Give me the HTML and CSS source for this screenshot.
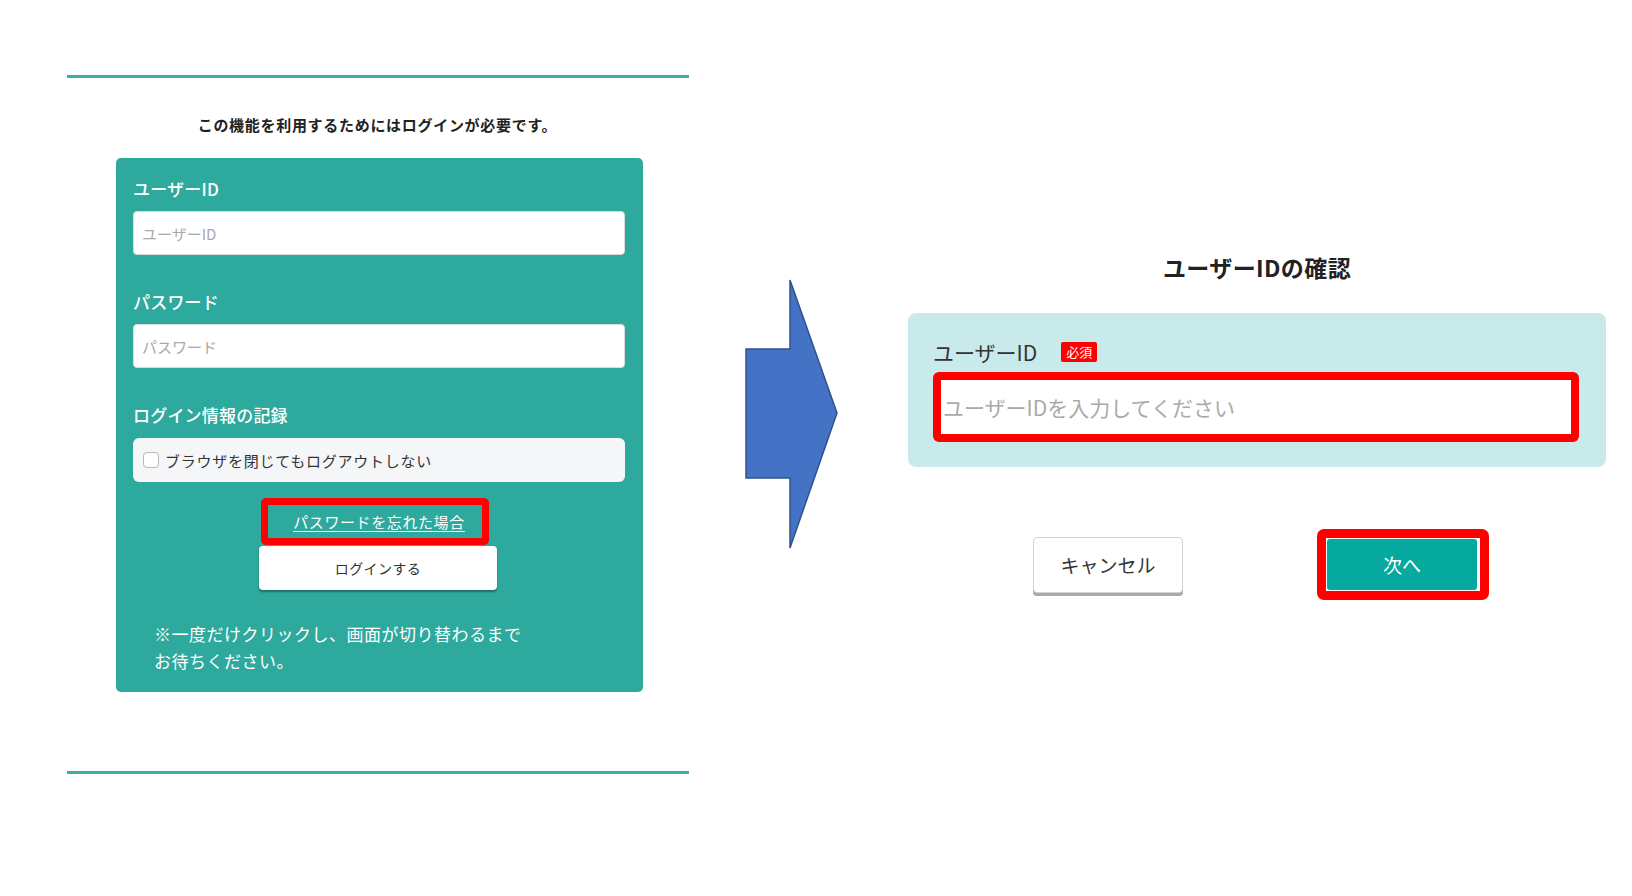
FILE: index.html
```html
<!DOCTYPE html>
<html lang="ja">
<head>
<meta charset="utf-8">
<title>ログイン</title>
<link rel="stylesheet" href="styles.css">
</head>
<body>
<div class="stage">
  <section class="left">
    <div class="rule"></div>
    <p class="lead">この機能を利用するためにはログインが必要です。</p>
    <form class="login">
      <label class="flabel">ユーザーID</label>
      <input class="field" type="text" placeholder="ユーザーID">
      <label class="flabel gap">パスワード</label>
      <input class="field" type="password" placeholder="パスワード">
      <label class="flabel gap">ログイン情報の記録</label>
      <div class="remember"><span class="check"></span><span>ブラウザを閉じてもログアウトしない</span></div>
      <div class="mark-link"><a href="#" class="forgot">パスワードを忘れた場合</a></div>
      <button type="button" class="login-btn">ログインする</button>
      <p class="note">※一度だけクリックし、画面が切り替わるまで<br>お待ちください。</p>
    </form>
    <div class="rule bottom"></div>
  </section>

  <svg class="arrow" width="96" height="272" viewBox="0 0 96 272">
    <polygon points="2,71 46,71 46,2 93,135 46,270 46,200 2,200" fill="#4472c4" stroke="#2f528f" stroke-width="1.5" stroke-linejoin="miter"/>
  </svg>

  <section class="right">
    <h2 class="title">ユーザーIDの確認</h2>
    <div class="confirm">
      <div class="clabel-row"><span class="clabel">ユーザーID</span><span class="badge">必須</span></div>
      <input class="cfield" type="text" placeholder="ユーザーIDを入力してください">
    </div>
    <div class="actions">
      <button type="button" class="cancel">キャンセル</button>
      <div class="mark-next"><button type="button" class="next">次へ</button></div>
    </div>
  </section>
</div>
</body>
</html>
```

FILE: styles.css
```css
* { box-sizing: border-box; }
html, body { margin: 0; padding: 0; background: #fff; }
body {
  font-family: "Noto Sans CJK JP", "Noto Sans", sans-serif;
  color: #333;
  width: 1632px;
  height: 896px;
  overflow: hidden;
}
.stage {
  display: flex;
  align-items: flex-start;
}
.left {
  margin-left: 67px;
  width: 625px;
  padding-top: 75px;
  display: flex;
  flex-direction: column;
}
.rule {
  height: 3px;
  width: 622px;
  background: #3aaea2;
}
.rule.bottom { margin-top: 79px; }
.lead {
  margin: 36px 0 0;
  text-align: center;
  font-size: 15px;
  line-height: 22px;
  font-weight: 700;
  color: #222;
  letter-spacing: 0.7px;
  padding-right: 4px;
}
.login {
  margin: 22px 0 0 49px;
  width: 527px;
  background: #2ea99d;
  border-radius: 5px;
  padding: 19px 18px 18px 17px;
  display: flex;
  flex-direction: column;
}
.flabel {
  color: #fff;
  font-size: 17px;
  line-height: 24px;
  font-weight: 500;
  letter-spacing: 0.2px;
}
.flabel.gap { margin-top: 35px; }
.field {
  margin-top: 10px;
  height: 44px;
  border: 1px solid #d8dcdc;
  border-radius: 4px;
  background: #fff;
  padding: 0 8px;
  font-family: inherit;
  font-size: 15px;
  color: #333;
}
.field::placeholder { color: #a9a9a9; }
.remember {
  margin-top: 11px;
  height: 44px;
  background: #f5f6f8;
  border-radius: 6px;
  display: flex;
  align-items: center;
  padding-left: 10px;
  gap: 6px;
  font-size: 15px;
  color: #333;
  letter-spacing: 0.75px;
}
.check {
  width: 16px;
  height: 16px;
  border: 1.5px solid #b9b9b9;
  border-radius: 4px;
  background: #fff;
  flex: none;
}
.mark-link {
  margin: 16px 0 0 128px;
  width: 228px;
  height: 47px;
  border: 7px solid #ff0000;
  border-radius: 5px;
  display: flex;
  align-items: center;
  justify-content: center;
  padding-left: 8px;
}
.forgot {
  color: #fff;
  font-size: 15px;
  line-height: 20px;
  text-decoration: underline;
  text-underline-offset: 3px;
  letter-spacing: 0.6px;
}
.login-btn {
  margin: 1px 0 0 126px;
  width: 238px;
  height: 44px;
  background: #fff;
  border: none;
  border-radius: 4px;
  box-shadow: 0 2px 2px rgba(0, 0, 0, 0.35);
  font-family: inherit;
  font-size: 14px;
  color: #333;
  letter-spacing: 0.4px;
}
.note {
  margin: 30px 0 0 21px;
  color: #fff;
  font-size: 17px;
  line-height: 27px;
  letter-spacing: 0.5px;
}
.arrow {
  margin-left: 52px;
  margin-top: 278px;
  flex: none;
}
.right {
  margin-left: 68px;
  width: 698px;
  margin-top: 252px;
  display: flex;
  flex-direction: column;
}
.title {
  margin: 0;
  text-align: center;
  font-size: 23px;
  line-height: 30px;
  font-weight: 700;
  color: #222;
  letter-spacing: 0.4px;
}
.confirm {
  margin-top: 31px;
  background: #c9eaea;
  border-radius: 8px;
  padding: 24px 27px 25px 25px;
  display: flex;
  flex-direction: column;
}
.clabel-row {
  display: flex;
  align-items: center;
  height: 30px;
}
.clabel {
  font-size: 21px;
  line-height: 30px;
  color: #333;
}
.badge {
  margin-left: 24px;
  background: #ff0000;
  color: #fff;
  font-size: 13px;
  line-height: 20px;
  height: 20px;
  padding: 0 5px;
  border-radius: 2px;
}
.cfield {
  margin-top: 5px;
  height: 70px;
  border: 8px solid #ff0000;
  border-radius: 6px;
  background: #fff;
  padding: 0 2px;
  font-family: inherit;
  font-size: 21px;
  color: #333;
}
.cfield::placeholder { color: #aaaaaa; }
.actions {
  margin-top: 62px;
  display: flex;
  align-items: center;
  justify-content: center;
  gap: 134px;
  padding-left: 8px;
}
.cancel {
  width: 150px;
  height: 56px;
  background: #fff;
  border: 1px solid #d4d4d4;
  border-radius: 4px;
  box-shadow: 0 3px 0 #a9a9a9;
  font-family: inherit;
  font-size: 19px;
  color: #333;
}
.mark-next {
  width: 172px;
  height: 71px;
  border: 9px solid #ff0000;
  border-radius: 7px;
  background: #fff;
  padding: 1px 3px 1px 1px;
  display: flex;
}
.next {
  flex: 1;
  background: #05a99e;
  border: none;
  border-radius: 3px;
  font-family: inherit;
  font-size: 19px;
  color: #fff;
}
```
